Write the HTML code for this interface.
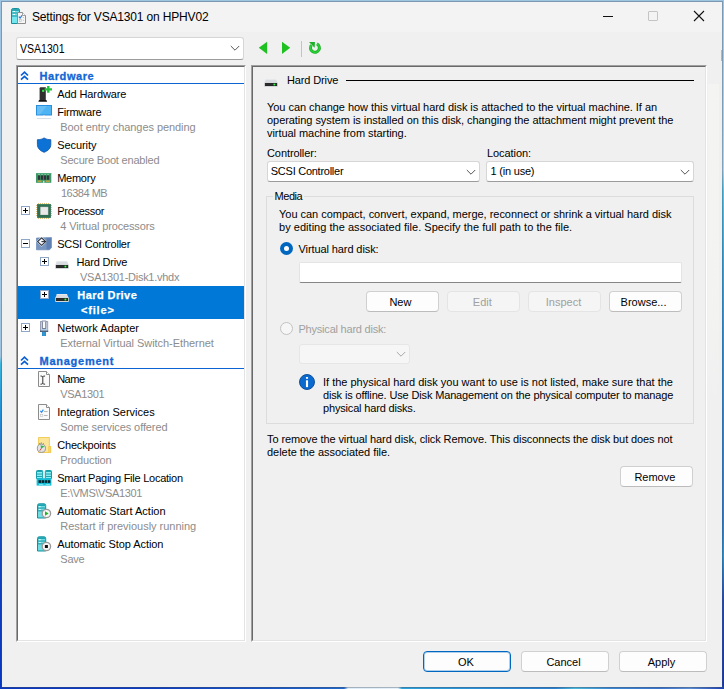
<!DOCTYPE html>
<html><head><meta charset="utf-8"><title>Settings for VSA1301 on HPHV02</title>
<style>
*{box-sizing:border-box;margin:0;padding:0}
html,body{width:724px;height:689px;overflow:hidden}
body{position:relative;background:#9cc1de;font-family:"Liberation Sans",sans-serif;font-size:11px;color:#000;line-height:13px}
.a{position:absolute;white-space:nowrap}
.combo{background:#fff;border:1px solid #d6d6d6;border-bottom-color:#9c9c9c;border-radius:3px}
.btn{background:#fdfdfd;border:1px solid #d0d0d0;border-bottom-color:#bcbcbc;border-radius:4px;height:21px}
.btn.dis{background:#f5f5f5;border-color:#e4e4e4}
.sub{color:#8c8c8c}
.hd{color:#1266d4;font-weight:bold;-webkit-text-stroke:0.3px #1266d4}
.sel{color:#fff;font-weight:bold;-webkit-text-stroke:0.25px #fff}
.dis{color:#a0a0a0}
.pm{width:9px;height:9px;border:1px solid #8fa6c6;background:#fff}
.pm:before{content:"";position:absolute;left:1px;top:3px;width:5px;height:1px;background:#000}
.pm.plus:after{content:"";position:absolute;left:3px;top:1px;width:1px;height:5px;background:#000}
</style></head><body>
<div class="a" style="left:0;top:0;width:724px;height:3px;background:#9dc5e2"></div>
<div class="a" style="left:0;top:0;width:3px;height:689px;background:linear-gradient(180deg,#9dc5e2 0px,#9fcae7 200px,#a0c4e0 356px,#3ab6de 364px,#2398d8 400px,#1d78d0 440px,#1a55c4 500px,#1240bc 560px,#0837c0 689px)"></div>
<div class="a" style="left:721px;top:0;width:3px;height:689px;background:linear-gradient(180deg,#9dc5e2 0px,#a6d2ec 170px,#4cc6ea 192px,#30a6de 260px,#2a90d8 340px,#2a7cd0 520px,#2292d2 556px,#1a48bc 600px,#1035b8 689px)"></div>
<div class="a" style="left:0;top:686px;width:724px;height:3px;background:linear-gradient(90deg,#0a38c0 0px,#0c3cc0 150px,#1a5cc8 300px,#2068cc 344px,#dcecf8 348px,#e4f0fa 398px,#2aa4dc 402px,#2a90d8 480px,#2a80d0 555px,#48b8dc 575px,#3a88d4 610px,#3a74cc 660px,#5a8cd4 690px,#1a40b8 724px)"></div>
<div class="a" style="left:1px;top:1px;width:722px;height:687px;background:rgba(70,80,95,0.38)"></div>
<div class="a" style="left:2px;top:2px;width:720px;height:685px;background:#f0f0f0"></div>
<div class="a" style="left:2px;top:2px;width:720px;height:30px;background:#f3f3f3"></div>
<svg class="a" style="left:10px;top:7px" width="17" height="18" viewBox="0 0 17 18">
<path d="M1.5 3.2 Q1.5 1.5 3.2 1.5 L7.8 1.5 Q9.5 1.5 9.5 3.2 L9.5 16.5 L1.5 16.5 Z" fill="#74e6ee" stroke="#178e9a" stroke-width="1"/>
<rect x="2" y="2" width="7" height="2" fill="#2aa7b3"/>
<rect x="2" y="5.5" width="7" height="1" fill="#1b8f9a"/>
<rect x="2" y="8.5" width="7" height="1" fill="#1b8f9a"/>
<rect x="3" y="4" width="2" height="1" fill="#fff"/><rect x="3" y="7" width="2" height="1" fill="#fff"/>
<path d="M7.5 5.5 L12.5 5.5 L15.5 8.5 L15.5 16.5 L7.5 16.5 Z" fill="#f6f6f6" stroke="#8e8e8e" stroke-width="1"/>
<path d="M12.5 5.5 L12.5 8.5 L15.5 8.5" fill="#fff" stroke="#8e8e8e" stroke-width="0.8"/>
<path d="M8.8 9.6 L10.1 11 L12 8.4" fill="none" stroke="#2f7de0" stroke-width="1.2"/>
<rect x="9.2" y="12.4" width="2" height="2" fill="none" stroke="#b5b5b5" stroke-width="0.6"/>
<rect x="12.8" y="10" width="1" height="1" fill="#c0c0c0"/><rect x="12.8" y="12.8" width="1" height="1" fill="#c0c0c0"/>
</svg>
<div class="a" style="left:32px;top:10px;font-size:12px;line-height:15px;letter-spacing:-0.168px;">Settings for VSA1301 on HPHV02</div>
<div class="a" style="left:603px;top:16px;width:10px;height:1px;background:#111"></div>
<div class="a" style="left:648px;top:11px;width:10px;height:10px;border:1px solid #c4c4c4;border-radius:1px"></div>
<svg class="a" style="left:693px;top:10px" width="12" height="12" viewBox="0 0 12 12"><path d="M1 1 L11 11 M11 1 L1 11" stroke="#111" stroke-width="1.1" fill="none"/></svg>
<div class="a combo" style="left:16px;top:37px;width:228px;height:23px"></div>
<div class="a" style="left:20px;top:42px;font-size:12.5px;line-height:15px;transform:scaleX(0.8442);transform-origin:0 0;">VSA1301</div>
<svg class="a" style="left:230px;top:45px" width="10" height="7" viewBox="0 0 10 7"><path d="M0.8 1 L5 5.2 L9.2 1" fill="none" stroke="#555" stroke-width="1"/></svg>
<svg class="a" style="left:258px;top:41px" width="10" height="14" viewBox="0 0 10 14"><path d="M9.1 0.7 L9.1 12.9 L0.8 6.8 Z" fill="#1fc022"/></svg>
<svg class="a" style="left:281px;top:41px" width="10" height="14" viewBox="0 0 10 14"><path d="M1 0.7 L1 12.9 L9.2 6.8 Z" fill="#1fc022"/></svg>
<div class="a" style="left:301px;top:41px;width:1px;height:16px;background:#c4c4c4"></div>
<svg class="a" style="left:304px;top:38px" width="22" height="20" viewBox="0 0 22 20"><path d="M12.9 5.9 A4.45 4.45 0 1 1 7.4 7.2" stroke="#1bb026" stroke-width="3" fill="none"/><path d="M12.9 5.9 A4.45 4.45 0 1 1 7.4 7.2" stroke="#2bd636" stroke-width="1.2" fill="none"/><path d="M5 4.1 L10.95 4.1 L10.65 9.8 Z" fill="#1bb026"/></svg>
<div class="a" style="left:708px;top:84px;width:11px;height:320px;background:linear-gradient(180deg,#f4f4f3 0%,#f3f3f2 70%,#f0f0f0 100%)"></div>
<div class="a" style="left:721px;top:50px;width:1px;height:11px;background:#b4b8bc"></div>
<div class="a" style="left:16px;top:65px;width:230px;height:577px;background:#fff;border:1px solid;border-color:#a0a0a0 #fff #fff #a0a0a0"></div>
<div class="a" style="left:17px;top:66px;width:228px;height:575px;border:1px solid;border-color:#696969 #e3e3e3 #e3e3e3 #696969"></div>
<svg class="a" style="left:20px;top:71px" width="9" height="10" viewBox="0 0 9 10"><path d="M1 4.5 L4.5 1.2 L8 4.5 M1 8.7 L4.5 5.4 L8 8.7" fill="none" stroke="#0a5fd8" stroke-width="1.7"/></svg>
<div class="a hd" style="left:39.5px;top:70px;letter-spacing:0.582px;">Hardware</div>
<div class="a" style="left:18px;top:83px;width:226px;height:1px;background:#0a64d2"></div>
<svg class="a" style="left:38px;top:86px" width="14" height="17" viewBox="0 0 14 17"><path d="M1.6 2.3 Q1.6 1.3 2.6 1.3 L7.8 1.3 L7.8 14 L1.6 14 Z" fill="#303030"/><path d="M1 14 L8.4 14 L9.2 15.7 L0.4 15.7 Z" fill="#141414"/><rect x="4.1" y="3.8" width="2.1" height="2.1" fill="#38e84e"/><path d="M9.1 0 L11.5 0 L11.5 2.15 L14 2.15 L14 4.55 L11.5 4.55 L11.5 6.7 L9.1 6.7 L9.1 4.55 L6.6 4.55 L6.6 2.15 L9.1 2.15 Z" fill="#20c43a"/></svg>
<div class="a" style="left:57.2px;top:88px;letter-spacing:-0.094px;">Add Hardware</div>
<svg class="a" style="left:36px;top:105px" width="16" height="14" viewBox="0 0 16 14"><rect x="0.5" y="0.5" width="15" height="9.5" fill="#4fb4f4" stroke="#2b8fe0" stroke-width="1"/><path d="M1 1 L11 1 L4 9.5 L1 9.5 Z" fill="#7fcaf8" opacity="0.5"/><rect x="7" y="10" width="2" height="1" fill="#c9d4de"/><rect x="1" y="13" width="14" height="0.8" fill="#cfd8e2"/></svg>
<div class="a" style="left:57.2px;top:106px;letter-spacing:-0.205px;">Firmware</div>
<div class="a sub" style="left:60.3px;top:121px;letter-spacing:-0.065px;">Boot entry changes pending</div>
<svg class="a" style="left:36px;top:137px" width="16" height="16" viewBox="0 0 16 16"><path d="M8.1 0.9 C6.2 2.3 3.8 2.7 1.4 2.7 L1.4 7.5 C1.4 11.3 4.2 13.8 8.1 15.3 C12 13.8 14.8 11.3 14.8 7.5 L14.8 2.7 C12.4 2.7 10 2.3 8.1 0.9 Z" fill="#0d72d6" stroke="#0a4fa4" stroke-width="0.8"/></svg>
<div class="a" style="left:57.2px;top:139px;letter-spacing:-0.069px;">Security</div>
<div class="a sub" style="left:60.3px;top:154px;letter-spacing:-0.192px;">Secure Boot enabled</div>
<svg class="a" style="left:36px;top:173px" width="16" height="10" viewBox="0 0 16 10"><rect x="0" y="0" width="15.3" height="9.8" fill="#3f9a68"/><rect x="0" y="0" width="15.3" height="0.7" fill="#5cb285"/><rect x="2.2" y="1" width="1.8" height="0.8" fill="#8fd0aa"/><rect x="5.2" y="1" width="1.8" height="0.8" fill="#8fd0aa"/><rect x="8.2" y="1" width="1.8" height="0.8" fill="#8fd0aa"/><rect x="11.2" y="1" width="1.8" height="0.8" fill="#8fd0aa"/><rect x="1.9" y="2.4" width="2.3" height="4.4" fill="#30343a"/><rect x="4.9" y="2.4" width="2.3" height="4.4" fill="#30343a"/><rect x="7.9" y="2.4" width="2.3" height="4.4" fill="#30343a"/><rect x="10.9" y="2.4" width="2.3" height="4.4" fill="#30343a"/><rect x="1.5" y="7.6" width="4" height="1.1" fill="#e8a838"/><rect x="9.8" y="7.6" width="4.2" height="1.1" fill="#e8a838"/><rect x="7.3" y="7.8" width="1" height="2" fill="#fff"/></svg>
<div class="a" style="left:57.2px;top:172px;letter-spacing:-0.256px;">Memory</div>
<div class="a sub" style="left:61px;top:187px;letter-spacing:-0.495px;">16384 MB</div>
<div class="a pm plus" style="left:21px;top:206px"></div>
<svg class="a" style="left:36px;top:203px" width="16" height="16" viewBox="0 0 16 16"><path d="M2 0.8 L14 0.8 M2 15.2 L14 15.2 M0.8 2 L0.8 14 M15.2 2 L15.2 14" fill="none" stroke="#d9a441" stroke-width="1" stroke-dasharray="1 1"/><rect x="1.1" y="1.1" width="13.8" height="13.8" fill="#2f6e50"/><rect x="1.1" y="1.1" width="13.8" height="1" fill="#3f8262"/><rect x="4.3" y="3.8" width="8" height="8.2" fill="#c9c9c9"/><rect x="4.8" y="4.3" width="7" height="7.2" fill="#e9e9e9"/></svg>
<div class="a" style="left:57.2px;top:205px;letter-spacing:-0.281px;">Processor</div>
<div class="a sub" style="left:60.3px;top:220px;letter-spacing:-0.136px;">4 Virtual processors</div>
<div class="a pm" style="left:21px;top:239px"></div>
<svg class="a" style="left:36px;top:237px" width="16" height="14" viewBox="0 0 16 14"><path d="M0.5 1 L15.5 0.5 L15.5 10.5 L13.5 12.8 L0.5 12.8 Z" fill="#7896c0" stroke="#5d7eb0" stroke-width="0.6"/><path d="M10.5 1 L15 1 L15 10.2 L13.2 12.4 L10.5 12.4 Z" fill="#5f80b4"/><path d="M5.6 -0.6 L11 4.6 L5.6 9.8 L0.2 4.6 Z" fill="#e6ecf5"/><path d="M5.6 0.9 L9.6 4.6 L5.6 8.3 L1.6 4.6 Z" fill="#f6f8fb" stroke="#2a2f38" stroke-width="1.1"/><path d="M5.4 4.6 L10.4 4.6" stroke="#2a2f38" stroke-width="1.1"/></svg>
<div class="a" style="left:57.2px;top:238px;letter-spacing:-0.228px;">SCSI Controller</div>
<div class="a pm plus" style="left:40px;top:257px"></div>
<svg class="a" style="left:55px;top:261px" width="14" height="9" viewBox="0 0 14 9"><path d="M1.9 0.1 L11.9 0.1 L13.7 4 L0.3 4 Z" fill="#d9dde1"/><path d="M1.9 0.1 L11.9 0.1 L12.2 0.9 L1.6 0.9 Z" fill="#e6e9ec"/><rect x="0.1" y="3.5" width="13.8" height="4.5" rx="0.9" fill="#d3d7db"/><rect x="0.95" y="3.9" width="12.15" height="3.1" rx="0.3" fill="#262626"/><rect x="0.95" y="4.9" width="12.15" height="0.5" fill="#3c3c3c"/><circle cx="10.4" cy="5.5" r="1.4" fill="#1a7a24" opacity="0.7"/><circle cx="10.4" cy="5.5" r="0.85" fill="#3cf54c"/></svg>
<div class="a" style="left:76.5px;top:256px;letter-spacing:-0.178px;">Hard Drive</div>
<div class="a sub" style="left:80px;top:271px;letter-spacing:-0.264px;">VSA1301-Disk1.vhdx</div>
<div class="a" style="left:18px;top:286px;width:226px;height:33px;background:#0078d7"></div>
<div class="a pm plus" style="left:40px;top:290px"></div>
<svg class="a" style="left:55px;top:294px" width="14" height="9" viewBox="0 0 14 9"><path d="M1.9 0.1 L11.9 0.1 L13.7 4 L0.3 4 Z" fill="#d9dde1"/><path d="M1.9 0.1 L11.9 0.1 L12.2 0.9 L1.6 0.9 Z" fill="#e6e9ec"/><rect x="0.1" y="3.5" width="13.8" height="4.5" rx="0.9" fill="#d3d7db"/><rect x="0.95" y="3.9" width="12.15" height="3.1" rx="0.3" fill="#262626"/><rect x="0.95" y="4.9" width="12.15" height="0.5" fill="#3c3c3c"/><circle cx="10.4" cy="5.5" r="1.4" fill="#1a7a24" opacity="0.7"/><circle cx="10.4" cy="5.5" r="0.85" fill="#3cf54c"/></svg>
<div class="a sel" style="left:77.3px;top:289px;letter-spacing:0.426px;">Hard Drive</div>
<div class="a sel" style="left:81px;top:304px;letter-spacing:0.825px;">&lt;file&gt;</div>
<div class="a pm plus" style="left:21px;top:323px"></div>
<svg class="a" style="left:39px;top:320px" width="10" height="16" viewBox="0 0 10 16"><rect x="3.2" y="0.3" width="3.7" height="1.6" rx="0.5" fill="#eef1f7" stroke="#98a2b8" stroke-width="0.7"/><rect x="1.5" y="1.6" width="7.2" height="9.8" fill="#dde5f2" stroke="#8e9ab2" stroke-width="0.9"/><rect x="2" y="8.8" width="6.2" height="2" fill="#b4d4ee"/><path d="M3.3 1.6 L3.3 8.6 L6.8 8.6 L6.8 1.6" fill="#fafbfe" stroke="#5c6478" stroke-width="0.9"/><rect x="1" y="10.6" width="8.2" height="1.3" fill="#4c566c"/><rect x="3" y="11.9" width="4" height="4.1" fill="#2b90cc"/><rect x="4.6" y="11.9" width="0.7" height="4.1" fill="#4aa6dc"/></svg>
<div class="a" style="left:57.2px;top:322px;letter-spacing:0.038px;">Network Adapter</div>
<div class="a sub" style="left:60.3px;top:337px;letter-spacing:-0.047px;">External Virtual Switch-Ethernet</div>
<svg class="a" style="left:20px;top:356px" width="9" height="10" viewBox="0 0 9 10"><path d="M1 4.5 L4.5 1.2 L8 4.5 M1 8.7 L4.5 5.4 L8 8.7" fill="none" stroke="#0a5fd8" stroke-width="1.7"/></svg>
<div class="a hd" style="left:39.5px;top:355px;letter-spacing:0.745px;">Management</div>
<div class="a" style="left:18px;top:368px;width:226px;height:1px;background:#0a64d2"></div>
<svg class="a" style="left:38px;top:371px" width="12" height="16" viewBox="0 0 12 16"><path d="M0.5 0.5 L8.5 0.5 L11.5 3.5 L11.5 15.5 L0.5 15.5 Z" fill="#fafafa" stroke="#8c8c8c" stroke-width="1"/><path d="M8.5 0.5 L8.5 3.5 L11.5 3.5" fill="#fff" stroke="#8c8c8c" stroke-width="1"/><path d="M2.5 5 Q4.3 5 4.8 5.8 Q5.3 5 7.1 5 M4.8 5.8 L4.8 12.4 M2.5 13.2 Q4.3 13.2 4.8 12.4 Q5.3 13.2 7.1 13.2" fill="none" stroke="#333" stroke-width="1"/></svg>
<div class="a" style="left:57.2px;top:373px;letter-spacing:-0.511px;">Name</div>
<div class="a sub" style="left:60.3px;top:388px;letter-spacing:-0.355px;">VSA1301</div>
<svg class="a" style="left:38px;top:404px" width="12" height="16" viewBox="0 0 12 16"><path d="M0.5 0.5 L8.5 0.5 L11.5 3.5 L11.5 15.5 L0.5 15.5 Z" fill="#fafafa" stroke="#8c8c8c" stroke-width="1"/><path d="M8.5 0.5 L8.5 3.5 L11.5 3.5" fill="#fff" stroke="#8c8c8c" stroke-width="1"/><path d="M2.3 6.8 L3.6 8.2 L5.4 5.6" fill="none" stroke="#2f8ee8" stroke-width="1.2"/><rect x="6" y="7" width="3.6" height="0.9" fill="#b0b0b0"/><rect x="2.6" y="10.3" width="2.2" height="2.2" fill="none" stroke="#c0c0c0" stroke-width="0.6"/><rect x="6" y="11" width="3.6" height="0.9" fill="#b0b0b0"/></svg>
<div class="a" style="left:57.2px;top:406px;letter-spacing:0.014px;">Integration Services</div>
<div class="a sub" style="left:60.3px;top:421px;letter-spacing:-0.098px;">Some services offered</div>
<svg class="a" style="left:36px;top:437px" width="16" height="17" viewBox="0 0 16 17"><path d="M2.5 0.5 L13.4 0.5 L13.4 9.5 L14.7 9.5 L14.7 15.5 L2.5 15.5 Z" fill="#fbe59a" stroke="#f0c84e" stroke-width="0.9"/><path d="M12.6 9.5 L14.5 9.5 L14.5 15.5 L12.6 15.5 Z" fill="#f8d970" stroke="#f0c84e" stroke-width="0.7"/><path d="M3 6.3 L5 7.3 M8 6.3 L6.5 7.3 M5.3 5.3 L5.3 7" stroke="#8a94a0" stroke-width="0.9" fill="none"/><circle cx="5.4" cy="11.3" r="4.1" fill="#e4e4e6" stroke="#8e8e92" stroke-width="0.9"/><path d="M4.6 8.2 L8.8 9.6 L5 11.6 Z" fill="#2fb44c"/><path d="M5.4 11.3 L3.8 13.6" stroke="#d0342c" stroke-width="0.9"/></svg>
<div class="a" style="left:57.2px;top:439px;letter-spacing:-0.177px;">Checkpoints</div>
<div class="a sub" style="left:60.3px;top:454px;letter-spacing:-0.129px;">Production</div>
<svg class="a" style="left:36px;top:470px" width="16" height="16" viewBox="0 0 16 16"><path d="M0.5 1.3 Q0.5 0.5 1.4 0.5 L5.8 0.5 Q6.7 0.5 6.7 1.3 L6.7 8.5 L0.5 8.5 Z" fill="#8ceef2" stroke="#149aa8" stroke-width="1"/><path d="M9.3 1.3 Q9.3 0.5 10.2 0.5 L14.6 0.5 Q15.5 0.5 15.5 1.3 L15.5 8.5 L9.3 8.5 Z" fill="#8ceef2" stroke="#149aa8" stroke-width="1"/><rect x="1" y="0.9" width="5.2" height="1.1" fill="#1ba6b4"/><rect x="9.8" y="0.9" width="5.2" height="1.1" fill="#1ba6b4"/><rect x="1" y="3.6" width="5.2" height="0.9" fill="#149aa8"/><rect x="9.8" y="3.6" width="5.2" height="0.9" fill="#149aa8"/><rect x="1" y="6" width="5.2" height="0.9" fill="#149aa8"/><rect x="9.8" y="6" width="5.2" height="0.9" fill="#149aa8"/><rect x="0.6" y="8.2" width="14.8" height="7.4" fill="#16bdd6"/><rect x="2.5" y="10.2" width="2.5" height="2.7" fill="#06222a"/><rect x="5.6" y="10.2" width="2.5" height="2.7" fill="#06222a"/><rect x="8.7" y="10.2" width="2.5" height="2.7" fill="#06222a"/><rect x="11.8" y="10.2" width="2.5" height="2.7" fill="#06222a"/><rect x="3" y="14" width="4.4" height="0.8" fill="#8cf0f4"/><rect x="9.6" y="14" width="4.4" height="0.8" fill="#8cf0f4"/></svg>
<div class="a" style="left:57.2px;top:472px;letter-spacing:-0.249px;">Smart Paging File Location</div>
<div class="a sub" style="left:60.3px;top:487px;letter-spacing:-0.366px;">E:\VMS\VSA1301</div>
<svg class="a" style="left:37px;top:503px" width="16" height="16" viewBox="0 0 16 16"><path d="M0.5 2.5 Q0.5 0.8 2.2 0.8 L7 0.8 Q8.7 0.8 8.7 2.5 L8.7 15 L0.5 15 Z" fill="#6fdde4" stroke="#128f9b" stroke-width="1"/><rect x="1" y="1.2" width="7.2" height="1.8" fill="#1ea4b0"/><rect x="1" y="4.6" width="7.2" height="0.9" fill="#128f9b"/><rect x="1" y="7.4" width="7.2" height="0.9" fill="#128f9b"/><rect x="2" y="3.2" width="1.6" height="1" fill="#fff"/><rect x="2" y="6" width="1.6" height="1" fill="#fff"/><circle cx="9.4" cy="10.5" r="4.2" fill="#f6f6f6" stroke="#9a9a9a" stroke-width="1.3"/><path d="M8 8.2 L11.6 10.5 L8 12.8 Z" fill="#22b422"/></svg>
<div class="a" style="left:57.2px;top:505px;letter-spacing:0.008px;">Automatic Start Action</div>
<div class="a sub" style="left:60.3px;top:520px;letter-spacing:-0.015px;">Restart if previously running</div>
<svg class="a" style="left:37px;top:536px" width="16" height="16" viewBox="0 0 16 16"><path d="M0.5 2.5 Q0.5 0.8 2.2 0.8 L7 0.8 Q8.7 0.8 8.7 2.5 L8.7 15 L0.5 15 Z" fill="#6fdde4" stroke="#128f9b" stroke-width="1"/><rect x="1" y="1.2" width="7.2" height="1.8" fill="#1ea4b0"/><rect x="1" y="4.6" width="7.2" height="0.9" fill="#128f9b"/><rect x="1" y="7.4" width="7.2" height="0.9" fill="#128f9b"/><rect x="2" y="3.2" width="1.6" height="1" fill="#fff"/><rect x="2" y="6" width="1.6" height="1" fill="#fff"/><circle cx="9.4" cy="10.5" r="4.2" fill="#f6f6f6" stroke="#9a9a9a" stroke-width="1.3"/><rect x="7.9" y="9" width="3" height="3" fill="#111"/></svg>
<div class="a" style="left:57.2px;top:538px;letter-spacing:-0.068px;">Automatic Stop Action</div>
<div class="a sub" style="left:60.3px;top:553px;letter-spacing:-0.220px;">Save</div>
<div class="a" style="left:251px;top:65px;width:456px;height:577px;border:1px solid;border-color:#a0a0a0 #fff #fff #a0a0a0"></div>
<div class="a" style="left:252px;top:66px;width:454px;height:575px;border:1px solid;border-color:#696969 #e3e3e3 #e3e3e3 #696969"></div>
<svg class="a" style="left:264px;top:79px" width="14" height="9" viewBox="0 0 14 9"><path d="M1.9 0.1 L11.9 0.1 L13.7 4 L0.3 4 Z" fill="#d9dde1"/><path d="M1.9 0.1 L11.9 0.1 L12.2 0.9 L1.6 0.9 Z" fill="#e6e9ec"/><rect x="0.1" y="3.5" width="13.8" height="4.5" rx="0.9" fill="#d3d7db"/><rect x="0.95" y="3.9" width="12.15" height="3.1" rx="0.3" fill="#262626"/><rect x="0.95" y="4.9" width="12.15" height="0.5" fill="#3c3c3c"/><circle cx="10.4" cy="5.5" r="1.4" fill="#1a7a24" opacity="0.7"/><circle cx="10.4" cy="5.5" r="0.85" fill="#3cf54c"/></svg>
<div class="a" style="left:287px;top:74px;letter-spacing:-0.128px;">Hard Drive</div>
<div class="a" style="left:346px;top:80px;width:348px;height:1px;background:#000"></div>
<div class="a" style="left:267px;top:101px;letter-spacing:-0.040px;">You can change how this virtual hard disk is attached to the virtual machine. If an</div>
<div class="a" style="left:267px;top:114px;letter-spacing:-0.053px;">operating system is installed on this disk, changing the attachment might prevent the</div>
<div class="a" style="left:267px;top:127px;letter-spacing:-0.051px;">virtual machine from starting.</div>
<div class="a" style="left:267px;top:147px;letter-spacing:-0.086px;">Controller:</div>
<div class="a" style="left:487px;top:147px;letter-spacing:-0.073px;">Location:</div>
<div class="a combo" style="left:267px;top:161px;width:213px;height:21px"></div>
<div class="a" style="left:270.8px;top:165px;letter-spacing:-0.261px;">SCSI Controller</div>
<svg class="a" style="left:466px;top:169px" width="10" height="7" viewBox="0 0 10 7"><path d="M0.8 1 L5 5.2 L9.2 1" fill="none" stroke="#555" stroke-width="1"/></svg>
<div class="a combo" style="left:486px;top:161px;width:208px;height:21px"></div>
<div class="a" style="left:490.5px;top:165px;letter-spacing:-0.206px;">1 (in use)</div>
<svg class="a" style="left:680px;top:169px" width="10" height="7" viewBox="0 0 10 7"><path d="M0.8 1 L5 5.2 L9.2 1" fill="none" stroke="#555" stroke-width="1"/></svg>
<div class="a" style="left:266px;top:196px;width:428px;height:228px;border:1px solid #dcdcdc"></div>
<div class="a" style="left:273px;top:190px;width:31px;height:13px;background:#f0f0f0"></div>
<div class="a" style="left:274.5px;top:190px;letter-spacing:-0.434px;">Media</div>
<div class="a" style="left:279px;top:208px;letter-spacing:-0.027px;">You can compact, convert, expand, merge, reconnect or shrink a virtual hard disk</div>
<div class="a" style="left:279px;top:221px;letter-spacing:0.032px;">by editing the associated file. Specify the full path to the file.</div>
<div class="a" style="left:280px;top:242px;width:13px;height:13px;border-radius:50%;background:#0067c0"></div>
<div class="a" style="left:284px;top:246px;width:5px;height:5px;border-radius:50%;background:#fff"></div>
<div class="a" style="left:298.5px;top:243px;letter-spacing:-0.096px;">Virtual hard disk:</div>
<div class="a" style="left:299px;top:262px;width:383px;height:21px;background:#fff;border:1px solid #e4e4e4;border-bottom:1px solid #868686;border-radius:2px"></div>
<div class="a btn" style="left:366px;top:291px;width:73px;"></div>
<div class="a" style="left:366px;top:296px;left:389.4px;">New</div>
<div class="a btn dis" style="left:447px;top:291px;width:73px;"></div>
<div class="a dis" style="left:447px;top:296px;left:472.8px;">Edit</div>
<div class="a btn dis" style="left:528px;top:291px;width:73px;"></div>
<div class="a dis" style="left:528px;top:296px;left:545.8px;">Inspect</div>
<div class="a btn" style="left:609px;top:291px;width:73px;"></div>
<div class="a" style="left:609px;top:296px;left:620.6px;">Browse...</div>
<div class="a" style="left:280px;top:322px;width:13px;height:13px;border-radius:50%;background:#f6f6f6;border:1px solid #c2c2c2"></div>
<div class="a dis" style="left:298.5px;top:323px;letter-spacing:-0.212px;">Physical hard disk:</div>
<div class="a" style="left:299px;top:344px;width:111px;height:20px;background:#f6f6f6;border:1px solid #e6e6e6;border-radius:3px"></div>
<svg class="a" style="left:396px;top:351px" width="10" height="7" viewBox="0 0 10 7"><path d="M0.8 1 L5 5.2 L9.2 1" fill="none" stroke="#a8a8a8" stroke-width="1"/></svg>
<svg class="a" style="left:299px;top:374px" width="16" height="16" viewBox="0 0 16 16"><circle cx="8" cy="8" r="7.5" fill="#0a6ad0" stroke="#064890" stroke-width="0.9"/><rect x="6.95" y="3.1" width="2.1" height="1.7" fill="#fff"/><rect x="6.95" y="6.3" width="2.1" height="6.8" fill="#fff"/></svg>
<div class="a" style="left:323px;top:376px;letter-spacing:-0.006px;">If the physical hard disk you want to use is not listed, make sure that the</div>
<div class="a" style="left:323px;top:389px;letter-spacing:-0.146px;">disk is offline. Use Disk Management on the physical computer to manage</div>
<div class="a" style="left:323px;top:402px;letter-spacing:-0.170px;">physical hard disks.</div>
<div class="a" style="left:267px;top:433px;letter-spacing:-0.097px;">To remove the virtual hard disk, click Remove. This disconnects the disk but does not</div>
<div class="a" style="left:267px;top:446px;letter-spacing:-0.039px;">delete the associated file.</div>
<div class="a btn" style="left:620px;top:466px;width:73px;"></div>
<div class="a" style="left:620px;top:471px;left:634.4px;">Remove</div>
<div class="a btn" style="left:423px;top:651px;width:88px;border:1px solid #0067c0;box-shadow:inset 0 0 0 1px rgba(0,103,192,0.3);"></div>
<div class="a" style="left:423px;top:656px;left:458.0px;">OK</div>
<div class="a btn" style="left:521px;top:651px;width:88px;"></div>
<div class="a" style="left:521px;top:656px;left:546.4px;">Cancel</div>
<div class="a btn" style="left:619px;top:651px;width:88px;"></div>
<div class="a" style="left:619px;top:656px;left:647.7px;">Apply</div>
</body></html>
